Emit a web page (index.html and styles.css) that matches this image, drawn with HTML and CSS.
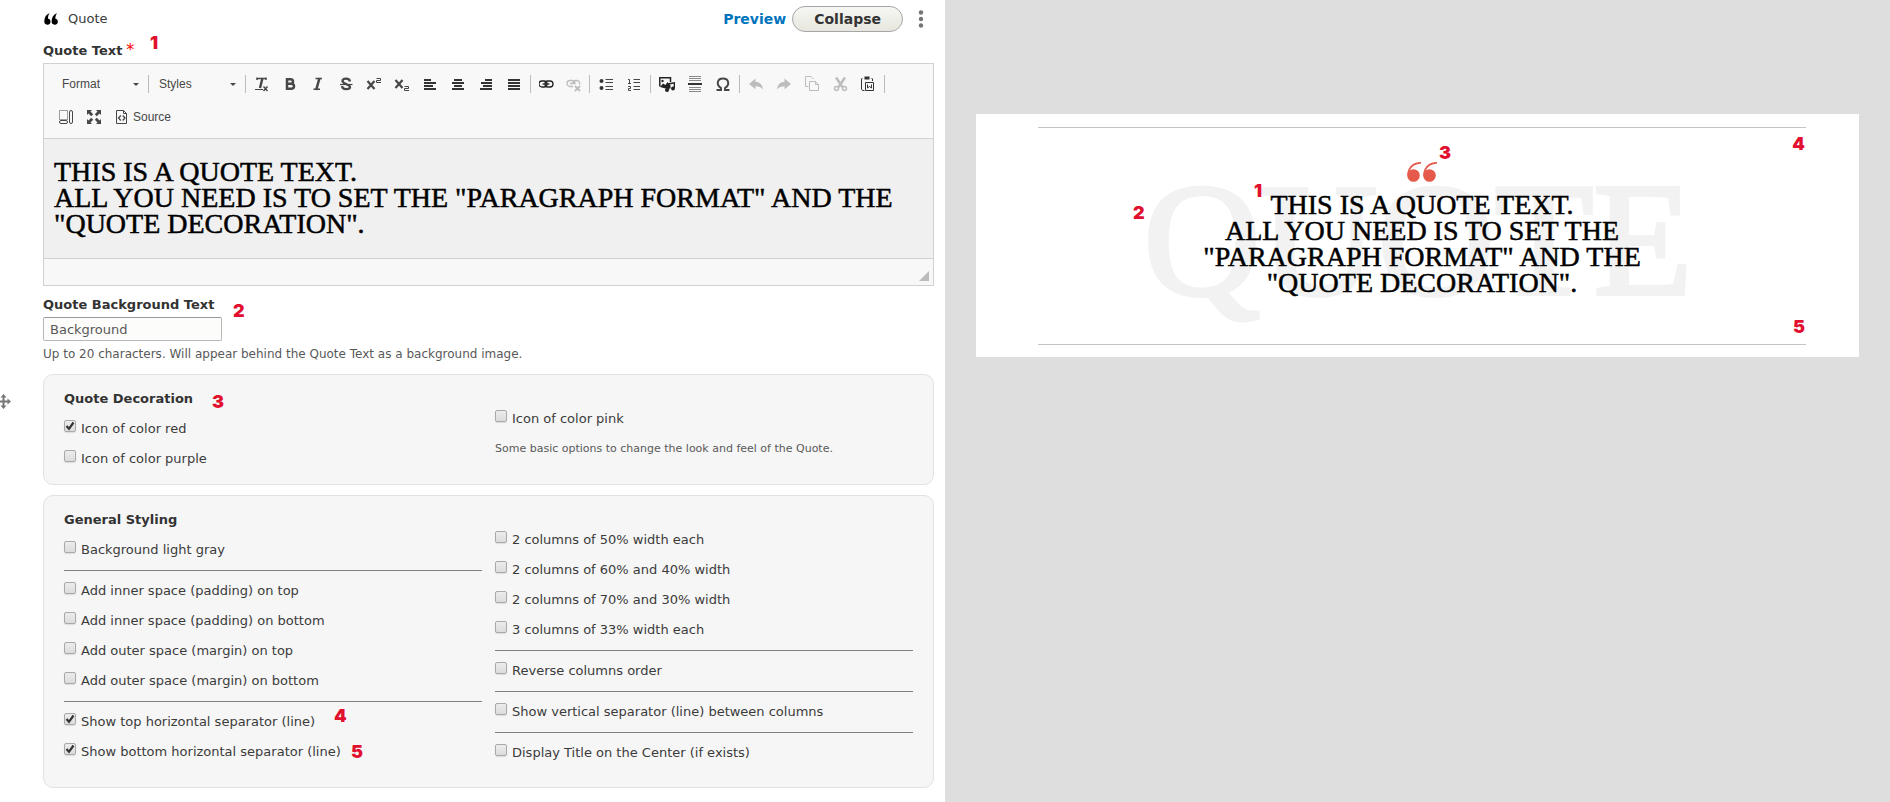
FILE: index.html
```html
<!DOCTYPE html>
<html lang="en">
<head>
<meta charset="utf-8">
<title>Quote paragraph</title>
<link rel="stylesheet" href="styles.css">
</head>
<body>
<main class="page">
  <section class="edit">
    <button class="drag" type="button" aria-label="Move">
      <svg width="15" height="15" viewBox="0 0 15 15"><path d="M7.500 0l3 3.500h-2V6.500H11.500v-2L15 7.500l-3.500 3v-2h-3v3h2l-3 3.500-3-3.500h2v-3h-3v2L0 7.500l3.500-3v2h3v-3h-2z" fill="#787878"/></svg>
    </button>
    <form class="form">
      <header class="head">
        <svg width="14" height="12" viewBox="0 0 14 12" fill="#000"><path d="M5.500 0C2 1.500.3 4.500.3 8.500a3.100 3.100 0 1 0 3.700-3C4 3.500 4.600 1.500 5.500 0zM13 0C9.500 1.500 7.600 4.500 7.600 8.500a3.100 3.100 0 1 0 3.700-3c0-2 .8-4 1.700-5.500z"/></svg>
        <span class="head-name">Quote</span>
        <a class="preview-link" href="#preview">Preview</a>
        <button class="collapse" type="button">Collapse</button>
        <button class="more" type="button" aria-label="More actions">
          <svg width="6" height="18" viewBox="0 0 6 18" fill="#757575"><circle cx="3" cy="2.500" r="2.200"/><circle cx="3" cy="9" r="2.200"/><circle cx="3" cy="15.500" r="2.200"/></svg>
        </button>
      </header>

      <div class="label anchor" id="quote-label">Quote Text<span class="required">*</span><span class="mark mark-text">1</span></div>
      <div class="editor">
        <div class="toolbar">
          <div class="group">
            <div class="combo combo-first"><select aria-label="Format"><option>Format</option></select></div>
            <i class="sep"></i>
            <div class="combo"><select aria-label="Styles"><option>Styles</option></select></div>
            <i class="sep"></i>
            <button class="tool" type="button" aria-label="Remove format"><svg viewBox="0 0 16 16" fill="none" stroke="#474747"><path d="M3 2.500h9M3 1.500v2.500M12 1.500v2.500" stroke-width="1.500"/><path d="M8.500 2L6 12" stroke-width="2.500"/><path d="M1 13.500h8"/><path d="M9.500 10.500l4 4.500M13.500 10.500l-4 4.500" stroke-width="1.500"/></svg></button>
            <button class="tool" type="button" aria-label="Bold"><svg viewBox="0 0 16 16" fill="none" stroke="#474747" stroke-width="2.500"><path d="M5 3.200h3.500c3.400 0 3.400 4.600 0 4.600H5h4c4 0 4 5 0 5H5M5 2v12"/></svg></button>
            <button class="tool" type="button" aria-label="Italic"><svg viewBox="0 0 16 16" fill="none" stroke="#474747"><path d="M5.500 2.500h6.500M3.500 13.200H10" stroke-width="1.500"/><path d="M9.500 2L6.200 14" stroke-width="2.500"/></svg></button>
            <button class="tool" type="button" aria-label="Strikethrough"><svg viewBox="0 0 16 16" fill="none" stroke="#474747"><path d="M12 5.500C11.500 1.500 4.500 2 4.500 5S12 8.500 12 11s-7.500 3.500-8-.8" stroke-width="2.300"/><path d="M2 8.500h12.500" stroke-width="1.200"/></svg></button>
            <button class="tool" type="button" aria-label="Superscript"><svg viewBox="0 0 16 16" fill="none" stroke="#474747"><path d="M1.500 5l7 8M8.500 5l-7 8" stroke-width="2.200"/><path d="M10.500 2.500h4V4.500h-4V6.500h4.500"/></svg></button>
            <button class="tool" type="button" aria-label="Subscript"><svg viewBox="0 0 16 16" fill="none" stroke="#474747"><path d="M1.500 4l7 8M8.500 4l-7 8" stroke-width="2.200"/><path d="M10.500 10.500h4v2h-4v2h4.500"/></svg></button>
            <button class="tool" type="button" aria-label="Align left"><svg viewBox="0 0 16 16" stroke="#333" stroke-width="2"><path d="M2 4h7M2 7h12M2 10h9M2 13h12"/></svg></button>
            <button class="tool" type="button" aria-label="Center"><svg viewBox="0 0 16 16" stroke="#333" stroke-width="2"><path d="M4 4h8M2 7h12M4 10h8M2 13h12"/></svg></button>
            <button class="tool" type="button" aria-label="Align right"><svg viewBox="0 0 16 16" stroke="#333" stroke-width="2"><path d="M7 4h7M3 7h11M5 10h9M2 13h12"/></svg></button>
            <button class="tool" type="button" aria-label="Justify"><svg viewBox="0 0 16 16" stroke="#333" stroke-width="2"><path d="M2 4h12M2 7h12M2 10h12M2 13h12"/></svg></button>
            <i class="sep"></i>
            <button class="tool tool-link" type="button" aria-label="Link"><svg viewBox="0 0 16 16" fill="none" stroke="#222" stroke-width="1.300"><rect x="0" y="5" width="8" height="6" rx="3"/><rect x="6" y="5" width="8" height="6" rx="3"/><path d="M3.500 8h7"/></svg></button>
            <button class="tool tool-link" type="button" aria-label="Unlink" disabled><svg viewBox="0 0 16 16" fill="none" stroke="#bdbdbd" stroke-width="1.300"><path d="M7 10.500H4a3 3 0 0 1 0-6h2.500a3 3 0 0 1 2.500 3H4M7 7.500a3 3 0 0 1 2.500-3H11a3 3 0 0 1 2.500 4"/><path d="M9 10l5 5M14 10l-5 5" stroke-width="1.800"/></svg></button>
            <i class="sep"></i>
            <button class="tool" type="button" aria-label="Bulleted list"><svg viewBox="0 0 16 16"><circle cx="3.500" cy="5" r="2" fill="#333"/><circle cx="3.500" cy="12" r="2" fill="#333"/><path d="M7.500 3.500H15M7.500 6.500H15M7.500 10.500H15M7.500 13.500H15" stroke="#474747"/></svg></button>
            <button class="tool" type="button" aria-label="Numbered list"><svg viewBox="0 0 16 16" fill="none" stroke="#474747"><path d="M2 3.500h1.500v4M2 7.500h3M2 10.500h2.500v2H2.500v2H5M7.500 3.500H14M7.500 6.500H14M7.500 10.500H14M7.500 13.500H14"/></svg></button>
            <i class="sep"></i>
            <button class="tool" type="button" aria-label="Media"><svg viewBox="0 0 16 16"><path d="M.8 10.500V1.800h10.700V6" fill="none" stroke="#222" stroke-width="1.500"/><circle cx="3.500" cy="5" r="1.200" fill="#222"/><path d="M1 11l3-3.500L6.500 9 8.500 6l3 3.500v3H6.500z" fill="#222"/><path d="M9.500 13.500V8l6-1.200V12" fill="none" stroke="#222" stroke-width="1.600"/><circle cx="8" cy="14" r="2" fill="#222"/><circle cx="14" cy="12.500" r="1.900" fill="#222"/></svg></button>
            <button class="tool" type="button" aria-label="Horizontal line"><svg viewBox="0 0 16 16"><path d="M2 .5h12M2 2.500h12M2 4.500h12M2 11.500h12M2 13.500h12M2 15.500h12" stroke="#8a8a8a"/><path d="M1 8h14" stroke="#333" stroke-width="2"/></svg></button>
            <button class="tool" type="button" aria-label="Special character"><svg viewBox="0 0 16 16" fill="none" stroke="#474747" stroke-width="2"><path d="M1.500 14h4.500v-2C1 9 2 2.500 8 2.500S15 9 10 12v2h4.500"/></svg></button>
            <i class="sep"></i>
            <button class="tool" type="button" aria-label="Undo" disabled><svg viewBox="0 0 16 16"><path d="M1 8l6.500-5.500v3.300C12 6 14.500 9 15 13.500 13 11 11 10.200 7.500 10.200v3z" fill="#bdbdbd"/></svg></button>
            <button class="tool" type="button" aria-label="Redo" disabled><svg viewBox="0 0 16 16"><path d="M15 8L8.500 2.500v3.300C4 6 1.500 9 1 13.500 3 11 5 10.200 8.500 10.200v3z" fill="#bdbdbd"/></svg></button>
            <button class="tool" type="button" aria-label="Copy" disabled><svg viewBox="0 0 16 16" fill="none" stroke="#bdbdbd"><path d="M4.500 10.500h-3v-10H7L9.500 3M5.500 5.500h6l3 3v6h-9zM11.500 5.500v3h3"/></svg></button>
            <button class="tool" type="button" aria-label="Cut" disabled><svg viewBox="0 0 16 16" fill="none" stroke="#bdbdbd"><path d="M4 1.500l6.500 9.500M13 1.500L6.500 11" stroke-width="2.500"/><circle cx="4.500" cy="12.500" r="2" stroke-width="1.500"/><circle cx="12.500" cy="12.500" r="2" stroke-width="1.500"/></svg></button>
            <button class="tool" type="button" aria-label="Paste from Word"><svg viewBox="0 0 16 16" fill="none" stroke="#333"><path d="M4.500 14.500H2.500L1.500 13V3l1-1M12.500 5V3l-1-1"/><path d="M4.500 2h5" stroke-width="3"/><path d="M5.500 6.500h8v8h-8zM7.500 8.500v3.500l2-1.500 2 1.500V8.500"/></svg></button>
            <i class="sep"></i>
          </div>
          <div class="group">
            <button class="tool" type="button" aria-label="Show blocks"><svg viewBox="0 0 16 16" fill="none" stroke="#474747"><path d="M1.500 1.500h8v9h-8z" stroke-dasharray="1 1"/><rect x="11.500" y="1.500" width="3" height="13" rx="1.500"/><rect x="1.500" y="11.500" width="8" height="3" rx="1.500"/></svg></button>
            <button class="tool" type="button" aria-label="Maximize"><svg viewBox="0 0 16 16" fill="#474747"><path d="M1 1h5L4.500 2.500l2.700 2.700-2 2-2.700-2.700L1 6zM15 1h-5l1.500 1.500-2.700 2.700 2 2 2.700-2.700L15 6zM1 15h5l-1.500-1.500 2.700-2.700-2-2-2.700 2.700L1 10zM15 15h-5l1.500-1.500-2.700-2.700 2-2 2.700 2.700L15 10z"/></svg></button>
            <button class="tool tool-source" type="button"><svg viewBox="0 0 16 16" fill="none" stroke="#474747"><path d="M2.500 1.500h7l3 3v10h-10zM9.500 1.500v3h3"/><path d="M6.800 6.500L4.500 9l2.300 2.500M8.700 6.500L11 9l-2.300 2.500" stroke-width="1.300"/></svg>Source</button>
          </div>
        </div>
        <div class="content quote-type" contenteditable="true" role="textbox" aria-multiline="true" aria-labelledby="quote-label">THIS IS A QUOTE TEXT.<br>ALL YOU NEED IS TO SET THE "PARAGRAPH FORMAT" AND THE "QUOTE DECORATION".</div>
        <div class="status"><svg width="10" height="10" viewBox="0 0 10 10"><path d="M10 0v10H0z" fill="#bcbcbc"/></svg></div>
      </div>

      <div class="field">
        <label class="label anchor" for="bg">Quote Background Text<span class="mark mark-bg">2</span></label>
        <input class="text" id="bg" type="text" value="Background" maxlength="20">
        <p class="help">Up to 20 characters. Will appear behind the Quote Text as a background image.</p>
      </div>

      <section class="box box-short">
        <div class="col">
          <h2 class="title anchor">Quote Decoration<span class="mark mark-deco">3</span></h2>
          <label class="option"><input type="checkbox" checked>Icon of color red</label>
          <label class="option"><input type="checkbox">Icon of color purple</label>
        </div>
        <div class="col col-right">
          <label class="option"><input type="checkbox">Icon of color pink</label>
          <p class="note">Some basic options to change the look and feel of the Quote.</p>
        </div>
      </section>

      <section class="box">
        <div class="col">
          <h2 class="title">General Styling</h2>
          <label class="option"><input type="checkbox">Background light gray</label>
          <hr class="rule">
          <label class="option"><input type="checkbox">Add inner space (padding) on top</label>
          <label class="option"><input type="checkbox">Add inner space (padding) on bottom</label>
          <label class="option"><input type="checkbox">Add outer space (margin) on top</label>
          <label class="option"><input type="checkbox">Add outer space (margin) on bottom</label>
          <hr class="rule">
          <label class="option anchor"><input type="checkbox" checked>Show top horizontal separator (line)<span class="mark mark-top">4</span></label>
          <label class="option anchor"><input type="checkbox" checked>Show bottom horizontal separator (line)<span class="mark mark-bottom">5</span></label>
        </div>
        <div class="col col-right">
          <label class="option"><input type="checkbox">2 columns of 50% width each</label>
          <label class="option"><input type="checkbox">2 columns of 60% and 40% width</label>
          <label class="option"><input type="checkbox">2 columns of 70% and 30% width</label>
          <label class="option"><input type="checkbox">3 columns of 33% width each</label>
          <hr class="rule">
          <label class="option"><input type="checkbox">Reverse columns order</label>
          <hr class="rule">
          <label class="option"><input type="checkbox">Show vertical separator (line) between columns</label>
          <hr class="rule">
          <label class="option"><input type="checkbox">Display Title on the Center (if exists)</label>
        </div>
      </section>
    </form>
  </section>

  <section class="result" id="preview">
    <div class="card">
      <div class="quote">
        <span class="backdrop">QUOTE</span>
        <svg class="quote-icon" width="30" height="20" viewBox="0 0 30 20" fill="#e65a4b"><circle cx="6.500" cy="13.500" r="6.300"/><circle cx="22.500" cy="13.500" r="6.300"/><path d="M14 0C5 0 .2 6 .2 13.500L2.500 10C3 6 8 1.800 14 1.800zM30 0c-9 0-13.800 6-13.800 13.500l2.300-3.500C19 6 24 1.800 30 1.800z"/></svg>
        <blockquote class="quote-body quote-type">THIS IS A QUOTE TEXT.<br>ALL YOU NEED IS TO SET THE "PARAGRAPH FORMAT" AND THE "QUOTE DECORATION".</blockquote>
        <span class="mark pin-text">1</span>
        <span class="mark pin-bg">2</span>
        <span class="mark pin-icon">3</span>
        <span class="mark pin-top">4</span>
        <span class="mark pin-bottom">5</span>
      </div>
    </div>
  </section>
</main>
</body>
</html>
```

FILE: styles.css
```css
* { box-sizing: border-box; }

body {
  margin: 0;
  background: #dedede;
  color: #3b3b3b;
  font: 13px/20px "DejaVu Sans", sans-serif;
}

button {
  border: 0;
  padding: 0;
  background: none;
  font: inherit;
  color: inherit;
}

.page {
  display: grid;
  grid-template-columns: 1fr 1fr;
  min-height: 100vh;
}

.edit {
  display: grid;
  grid-template-columns: 43px minmax(0, 1fr);
  padding-right: 11px;
  background: #fff;
}

.drag {
  display: flex;
  align-self: center;
  margin-left: -4px;
}

.head {
  display: flex;
  align-items: center;
  height: 38px;
  padding-left: 1px;
}

.head-name { flex: 1; margin-left: 10px; }

.preview-link {
  margin-right: 6px;
  color: #0074bd;
  font-size: 14px;
  font-weight: bold;
  text-decoration: none;
}

.collapse {
  height: 26px;
  padding: 0 21px;
  border: 1px solid #a6a6a6;
  border-radius: 20px;
  background: linear-gradient(#f6f6f3, #e7e7df);
  color: #333;
  font-size: 14px;
  font-weight: bold;
}

.more { display: flex; margin: 0 10px 0 15px; }

.anchor { position: relative; }

.label {
  display: block;
  width: max-content;
  color: #333;
  font-weight: bold;
  line-height: 25px;
}

.required {
  margin-left: 4px;
  color: #f00;
  font-size: 16px;
  font-weight: normal;
  line-height: 16px;
}

.mark {
  position: absolute;
  color: #e2102f;
  font: 900 18px/18px Inter, sans-serif;
}

.mark-text { left: 107px; top: -4px; }
.mark-bg { left: 190px; top: 10px; }
.mark-deco { left: 148px; top: 4px; }
.mark-top { left: 270px; top: 0; }
.mark-bottom { left: 287px; top: 6px; }

.editor { border: 1px solid #d1d1d1; }

.toolbar {
  display: flex;
  flex-wrap: wrap;
  gap: 5px;
  padding: 6px 8px 7px;
  border-bottom: 1px solid #d1d1d1;
  background: #f8f8f8;
}

.group { display: flex; align-items: center; }

.combo { position: relative; width: 92px; }

.combo::after {
  content: "";
  position: absolute;
  right: 7px;
  top: 13px;
  border: 3px solid transparent;
  border-top-color: #474747;
  border-bottom: 0;
}

.combo select {
  width: 100%;
  height: 28px;
  padding: 0 8px;
  border: 0;
  appearance: none;
  background: none;
  color: #474747;
  font: 12px "Liberation Sans", Arial, sans-serif;
}

.combo-first { width: 94px; }
.combo-first select { padding-left: 10px; }

.sep {
  width: 1px;
  height: 18px;
  margin: 0 2px;
  background: #bcbcbc;
}

.tool {
  display: flex;
  align-items: center;
  justify-content: center;
  width: 28px;
  height: 28px;
}

.tool svg { width: 16px; height: 16px; }

.tool-link { width: 27px; }

.tool-source {
  gap: 3px;
  width: auto;
  padding: 0 6px;
  color: #474747;
  font: 12px "Liberation Sans", Arial, sans-serif;
}

.quote-type {
  color: #000;
  font: 28px/26px "Liberation Serif", "Times New Roman", serif;
  -webkit-text-stroke: 0.5px #000;
}

.content { padding: 20px 10px 21px; background: #f0f0f0; }

.status {
  display: flex;
  align-items: flex-end;
  justify-content: flex-end;
  height: 27px;
  padding: 4px;
  border-top: 1px solid #d1d1d1;
  background: #f8f8f8;
}

.field { margin: 6px 0 10px; }

.text {
  display: block;
  width: 179px;
  height: 24px;
  padding: 0 6px;
  border: 1px solid #b8b8b8;
  border-top-color: #999;
  border-radius: 2px;
  background: #fcfcfa;
  color: #595959;
  font: inherit;
}

.help { margin: 3px 0 0; color: #595959; font-size: 12px; }

.box {
  display: grid;
  grid-template-columns: 1fr 1fr;
  gap: 13px;
  padding: 0 20px 19px;
  border: 1px solid #e2e2e2;
  border-radius: 10px;
  background: #f6f6f6;
}

.box + .box { margin-top: 10px; }
.box-short { padding-bottom: 10px; }

.col-right { padding-top: 29px; }

.title {
  width: max-content;
  margin: 14px 0 5px;
  color: #333;
  font-size: 13px;
  line-height: 20px;
}

.option {
  display: flex;
  gap: 5px;
  width: max-content;
  height: 30px;
  padding-top: 5px;
}

.option input {
  width: 12px;
  height: 12px;
  margin: 1px 0 0;
  border: 1px solid #a9a9a9;
  border-radius: 2px;
  appearance: none;
  background: linear-gradient(#ececec, #dcdcdc);
  box-shadow: 0 1px 1px #ddd;
}

.option input:checked {
  background: url("data:image/svg+xml,%3Csvg xmlns='http://www.w3.org/2000/svg' viewBox='0 0 10 10'%3E%3Cpath d='M1.500 5l2.500 2.800L8.500 1.500' fill='none' stroke='%23333' stroke-width='2.200'/%3E%3C/svg%3E"), linear-gradient(#ececec, #dcdcdc);
}

.rule {
  height: 1px;
  margin: 5px 0;
  border: 0;
  background: #808080;
}

.note { margin: 5px 0 0; color: #595959; font-size: 11px; }

.result { padding: 114px 31px 0; }

.card { padding: 13px 53px 12px 62px; background: #fff; }

.quote {
  position: relative;
  display: flex;
  flex-direction: column;
  align-items: center;
  gap: 10px;
  padding: 34px 0 48px;
  border: 1px solid #c4c4c4;
  border-width: 1px 0;
}

.backdrop {
  position: absolute;
  left: 0;
  right: 8px;
  top: 30px;
  color: #f2f2f2;
  font: 162px/164px "Liberation Serif", "Times New Roman", serif;
  text-align: center;
  -webkit-text-stroke: 4px #f2f2f2;
}

.quote-icon, .quote-body { position: relative; }

.quote-body {
  max-width: 480px;
  margin: 0;
  text-align: center;
}

.pin-text { left: calc(50% - 168px); top: 54px; }
.pin-bg { left: calc(50% - 289px); top: 76px; }
.pin-icon { left: calc(50% + 17px); top: 16px; }
.pin-top { right: 1px; top: 7px; }
.pin-bottom { right: 1px; bottom: 8px; }
```
